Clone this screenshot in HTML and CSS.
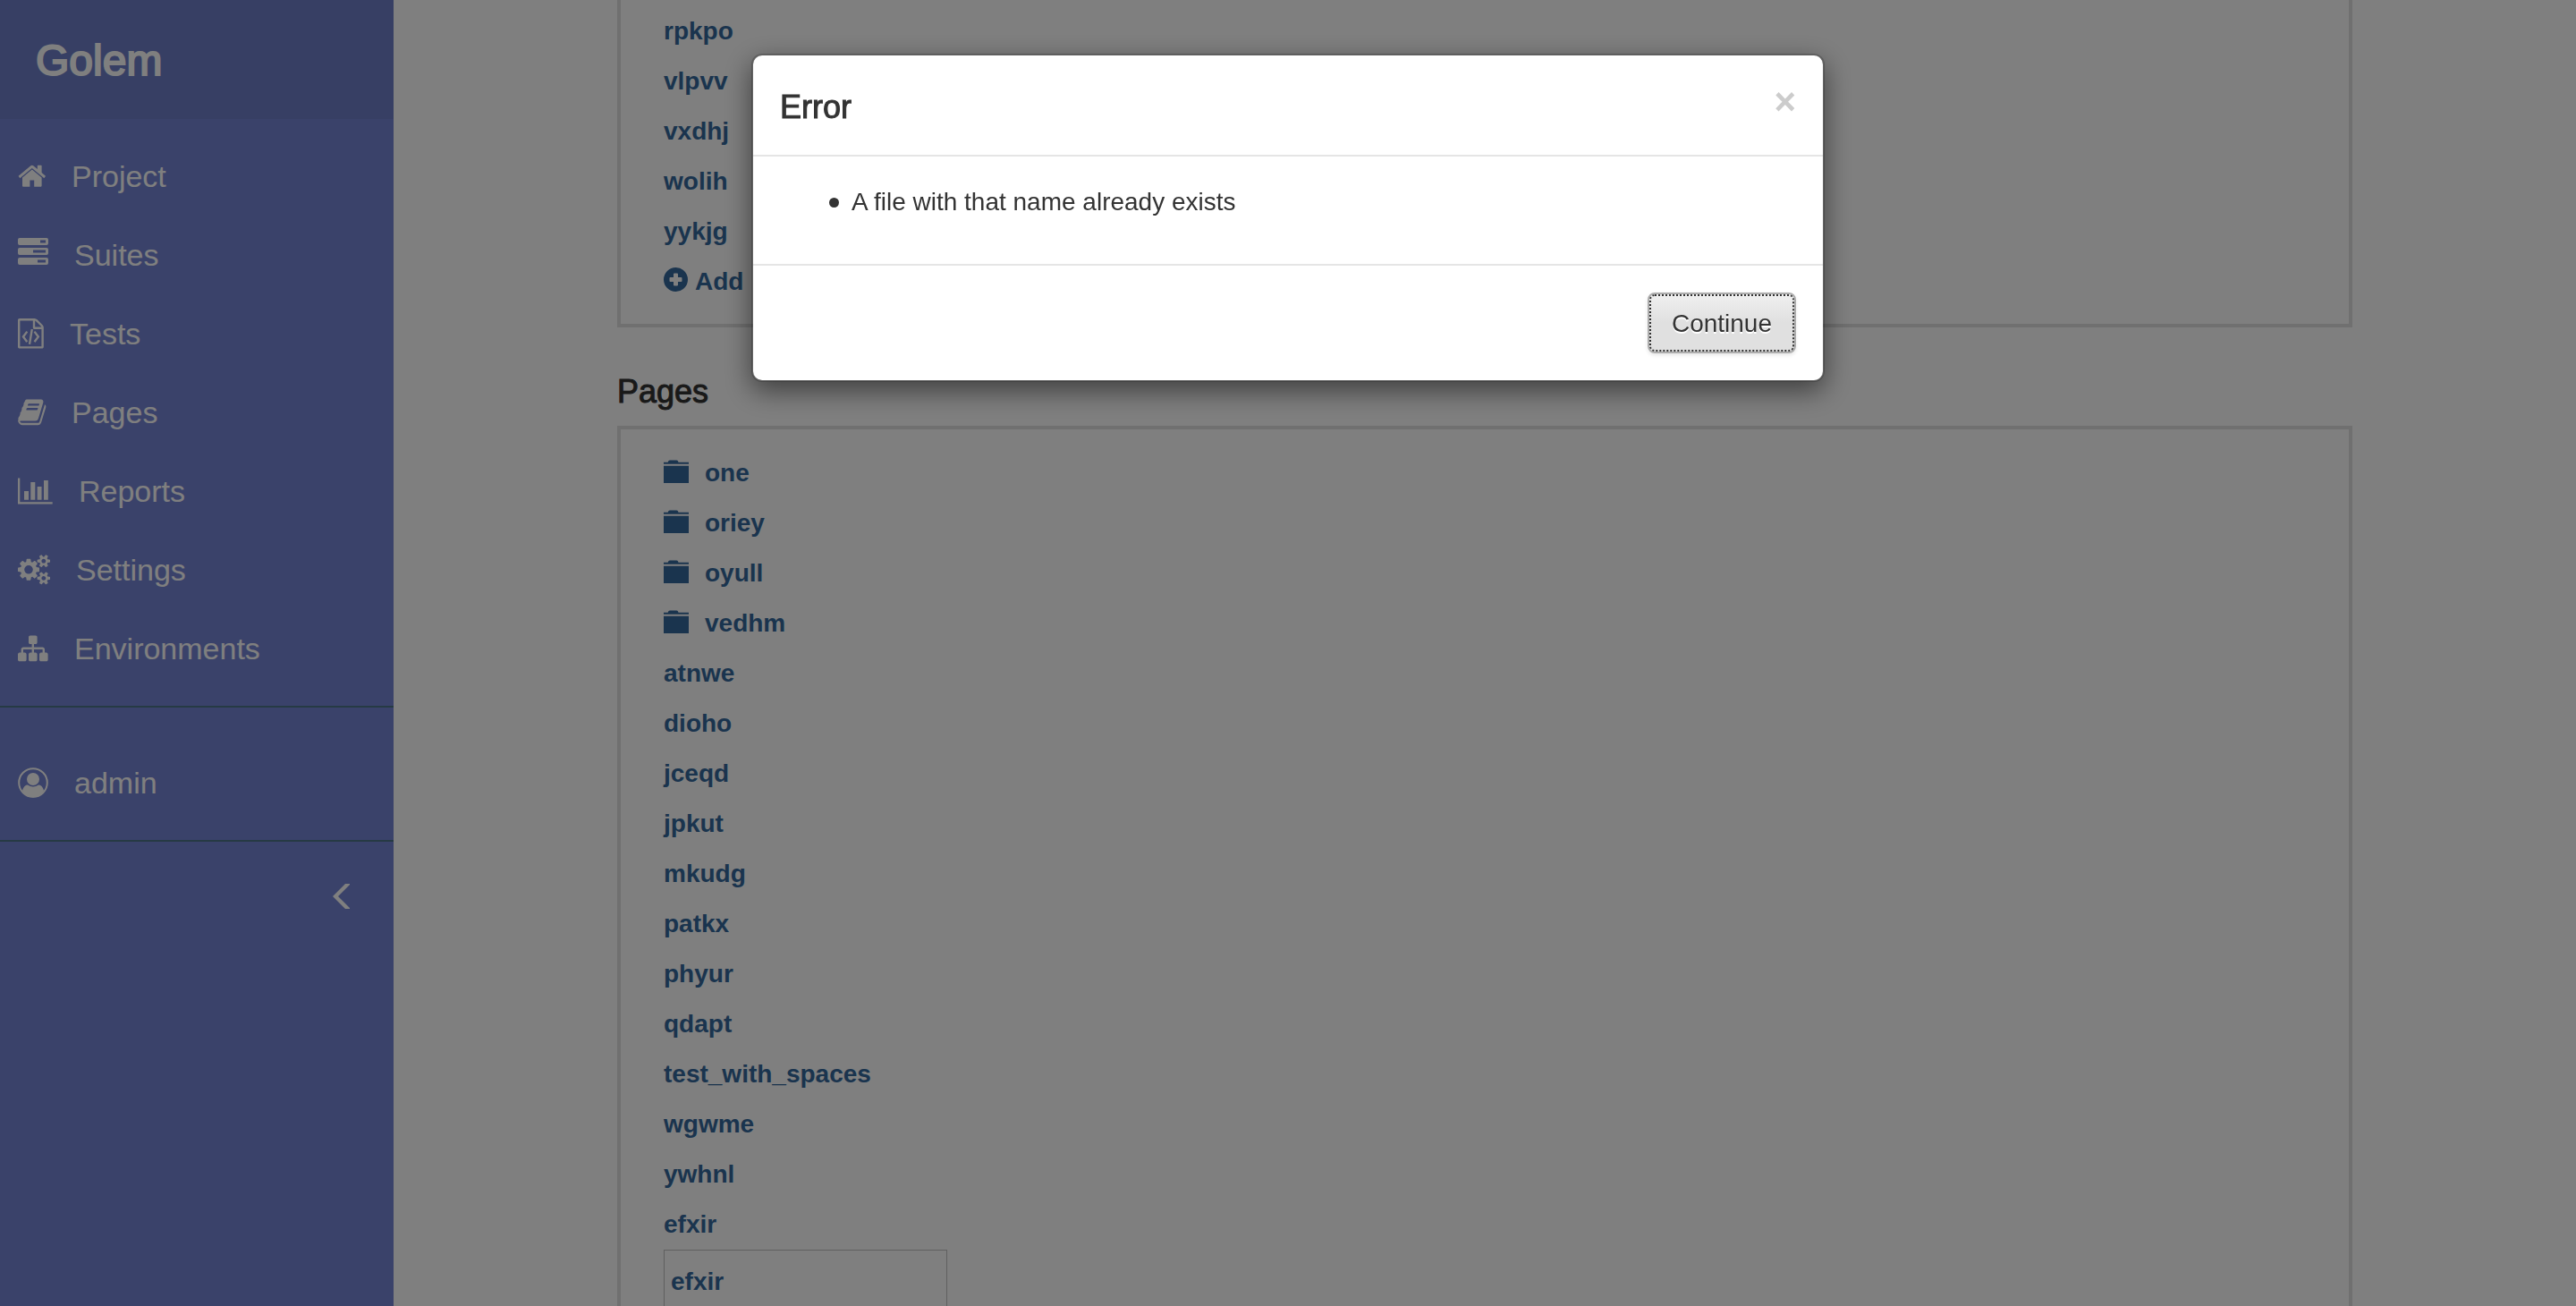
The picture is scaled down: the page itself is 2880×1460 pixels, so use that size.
FILE: index.html
```html
<!DOCTYPE html>
<html lang="en">
<head>
<meta charset="utf-8">
<title>Golem</title>
<link rel="stylesheet" href="styles.css">
</head>
<body>
<svg class="sprite" aria-hidden="true">
  <symbol id="folder" viewBox="0 0 28 28">
    <path d="M0 1.700h4.700Q5.200-.5 7-.5h7.500Q16 -.5 16.500 1.700H28v2H0zM0 5.700h28V25H0z"/>
  </symbol>
</svg>
<div class="layout">
  <aside class="sidebar">
    <a class="brand" href="#">Golem</a>
    <nav>
      <ul class="menu">
        <li><a href="#"><svg width="31" height="40" viewBox="0 0 31 40"><path transform="translate(-1 3) scale(.01875)" d="M1472 992v480q0 26-19 45t-45 19h-384v-384h-256v384h-384q-26 0-45-19t-19-45v-480q0-1 .5-3t.5-3l575-474 575 474q1 2 1 6zm223-69l-62 74q-8 9-21 11h-3q-13 0-21-7l-692-577-692 577q-12 8-24 7-13-2-21-11l-62-74q-8-10-7-23.500t11-21.500l719-599q32-26 76-26t76 26l244 204v-195q0-14 9-23t23-9h192q14 0 23 9t9 23v408l219 182q10 8 11 21.500t-7 23.500z"/></svg>Project</a></li>
        <li><a href="#"><svg width="34" height="40" viewBox="0 0 34 40"><path fill-rule="evenodd" d="M2 1h30q2 0 2 2v4q0 2-2 2H2q-2 0-2-2V3q0-2 2-2zM25 3.500v3h6v-3zM2 12h30q2 0 2 2v4q0 2-2 2H2q-2 0-2-2v-4q0-2 2-2zM17 14.500v3h14v-3zM2 23h30q2 0 2 2v4q0 2-2 2H2q-2 0-2-2v-4q0-2 2-2zM22 25.500v3h9v-3z"/></svg>Suites</a></li>
        <li><a href="#"><svg width="29" height="40" viewBox="0 0 29 40"><g transform="translate(0 3) scale(.01875)"><path transform="translate(-128 0)" d="M1596 380q28 28 48 76t20 88v1152q0 40-28 68t-68 28h-1344q-40 0-68-28t-28-68v-1600q0-40 28-68t68-28h896q40 0 88 20t76 48zm-444-244v376h376q-10-29-22-41l-313-313q-12-12-41-22zm384 1528v-1024h-416q-40 0-68-28t-28-68v-416h-768v1536h1280z"/><path d="M480 768q8-11 21-12.500t24 6.500l51 38q11 8 12.500 21t-6.500 24l-182 243 182 243q8 11 6.500 24t-12.500 21l-51 38q-11 8-24 6.500t-21-12.500l-226-301q-14-19 0-38zm802 301q14 19 0 38l-226 301q-8 11-21 12.500t-24-6.500l-51-38q-11-8-12.500-21t6.500-24l182-243-182-243q-8-11-6.500-24t12.500-21l51-38q11-8 24-6.500t21 12.500zm-620 461q-13-2-20.500-13t-5.500-24l138-831q2-13 13-20.500t24-5.500l63 10q13 2 20.500 13t5.500 24l-138 831q-2 13-13 20.500t-24 5.500z"/></g></svg>Tests</a></li>
        <li><a href="#"><svg width="31" height="40" viewBox="0 0 31 40"><path transform="translate(-1 3) scale(.01875)" d="M1703 478q40 57 18 129l-275 906q-19 64-76.500 107.500t-122.500 43.500h-923q-77 0-148.500-53.500t-99.500-131.500q-24-67-2-127 0-4 3-27t4-37q1-8-3-21.500t-3-19.500q2-11 8-21t16.500-23.500 16.500-23.500q23-38 45-91.500t30-91.500q3-10 .5-30t-.5-28q3-11 17-28t17-23q21-36 42-92t25-90q1-9-2.500-32t.5-28q4-13 22-30.500t22-22.500q19-26 42.500-84.500t27.500-96.500q1-8-3-25.500t-2-26.500q2-8 9-18t18-23 17-21q8-12 16.500-30.500t15-35 16-36 19.500-32 26.500-23.500 36-11.500 47.500 5.500l-1 3q38-9 51-9h761q74 0 114 56t18 130l-274 906q-36 119-71.500 153.500t-128.500 34.500h-869q-27 0-38 15-11 16-1 43 24 70 144 70h923q29 0 56-15.500t35-41.500l300-987q7-22 5-57 38 15 59 43zm-1064 2q-4 13 2 22.500t20 9.500h608q13 0 25.500-9.500t16.500-22.500l21-64q4-13-2-22.500t-20-9.500h-608q-13 0-25.500 9.500t-16.500 22.500zm-83 256q-4 13 2 22.500t20 9.500h608q13 0 25.500-9.500t16.500-22.500l21-64q4-13-2-22.500t-20-9.500h-608q-13 0-25.500 9.500t-16.500 22.500z"/></svg>Pages</a></li>
        <li><a href="#"><svg width="39" height="40" viewBox="0 0 39 40"><path d="M0 5.500h2.300v26.800h36.400v2.300H0zM7 20h5v9.700H7zM14.300 10h5v19.700h-5zM21.700 15h4.800v14.700h-4.800zM29 8h4.800v21.700H29z"/></svg>Reports</a></li>
        <li><a href="#"><svg width="36" height="40" viewBox="0 0 36 40"><path transform="translate(0 3) scale(.01875)" d="M896 896q0-106-75-181t-181-75-181 75-75 181 75 181 181 75 181-75 75-181zm768 512q0-52-38-90t-90-38-90 38-38 90q0 53 37.500 90.500t90.500 37.500 90.500-37.500 37.500-90.500zm0-1024q0-52-38-90t-90-38-90 38-38 90q0 53 37.500 90.500t90.500 37.500 90.500-37.500 37.500-90.500zm-384 421v185q0 10-7 19.500t-16 10.500l-155 24q-11 35-32 76 34 48 90 115 7 11 7 20 0 12-7 19-23 30-82.500 89.500t-78.500 59.500q-11 0-21-7l-115-90q-37 19-77 31-11 108-23 155-7 24-30 24h-186q-11 0-20-7.500t-10-17.500l-23-153q-34-10-75-31l-118 89q-7 7-20 7-11 0-21-8-144-133-144-160 0-9 7-19 10-14 41-53t47-61q-23-44-35-82l-152-24q-10-1-17-9.500t-7-19.500v-185q0-10 7-19.500t16-10.500l155-24q11-35 32-76-34-48-90-115-7-11-7-20 0-12 7-20 22-30 82-89t79-59q11 0 21 7l115 90q34-18 77-32 11-108 23-154 7-24 30-24h186q11 0 20 7.500t10 17.500l23 153q34 10 75 31l118-89q8-7 20-7 11 0 21 8 144 133 144 160 0 8-7 19-12 16-42 54t-45 60q23 48 34 82l152 23q10 2 17 10.500t7 19.500zm640 533v140q0 16-149 31-12 27-30 52 51 113 51 138 0 4-4 7-122 71-124 71-8 0-46-47t-52-68q-20 2-30 2t-30-2q-14 21-52 68t-46 47q-2 0-124-71-4-3-4-7 0-25 51-138-18-25-30-52-149-15-149-31v-140q0-16 149-31 13-29 30-52-51-113-51-138 0-4 4-7 4-2 35-20t59-34 30-16q8 0 46 46.500t52 67.500q20-2 30-2t30 2q51-71 92-112l6-2q4 0 124 70 4 3 4 7 0 25-51 138 17 23 30 52 149 15 149 31zm0-1024v140q0 16-149 31-12 27-30 52 51 113 51 138 0 4-4 7-122 71-124 71-8 0-46-47t-52-68q-20 2-30 2t-30-2q-14 21-52 68t-46 47q-2 0-124-71-4-3-4-7 0-25 51-138-18-25-30-52-149-15-149-31v-140q0-16 149-31 13-29 30-52-51-113-51-138 0-4 4-7 4-2 35-20t59-34 30-16q8 0 46 46.500t52 67.500q20-2 30-2t30 2q51-71 92-112l6-2q4 0 124 70 4 3 4 7 0 25-51 138 17 23 30 52 149 15 149 31z"/></svg>Settings</a></li>
        <li><a href="#"><svg width="34" height="40" viewBox="0 0 34 40"><path transform="translate(0 3) scale(.01875)" d="M1792 1248v320q0 40-28 68t-68 28h-320q-40 0-68-28t-28-68v-320q0-40 28-68t68-28h96v-192h-512v192h96q40 0 68 28t28 68v320q0 40-28 68t-68 28h-320q-40 0-68-28t-28-68v-320q0-40 28-68t68-28h96v-192h-512v192h96q40 0 68 28t28 68v320q0 40-28 68t-68 28h-320q-40 0-68-28t-28-68v-320q0-40 28-68t68-28h96v-192q0-52 38-90t90-38h512v-192h-96q-40 0-68-28t-28-68v-320q0-40 28-68t68-28h320q40 0 68 28t28 68v320q0 40-28 68t-68 28h-96v192h512q52 0 90 38t38 90v192h96q40 0 68 28t28 68z"/></svg>Environments</a></li>
      </ul>
      <ul class="menu menu-user">
        <li><a href="#"><svg width="34" height="40" viewBox="0 0 34 40"><circle cx="17" cy="20" r="15.800" fill="none" stroke="currentColor" stroke-width="2"/><circle cx="17" cy="16" r="7"/><path d="M5 29C6 25 8 22.500 11 22.500q6 4 12 0C26 22.500 28 25 29 29q-4 7.500-12 7.500T5 29z"/></svg>admin</a></li>
      </ul>
    </nav>
    <button class="collapse" type="button" aria-label="Collapse menu"><svg width="19" height="28" viewBox="0 0 19 28"><path d="M14 0h5v1L6 14l13 13v1h-5L0 14z"/></svg></button>
  </aside>
  <main class="content">
    <section class="panel panel-cut">
      <ul class="files">
        <li><a href="#">rpkpo</a></li>
        <li><a href="#">vlpvv</a></li>
        <li><a href="#">vxdhj</a></li>
        <li><a href="#">wolih</a></li>
        <li><a href="#">yykjg</a></li>
        <li><a class="add" href="#"><svg width="27" height="32" viewBox="0 0 27 32"><path fill-rule="evenodd" d="M13.500 0a13.500 13.500 0 1 0 0 27a13.500 13.500 0 1 0 0-27zM12 6.500h3q1 0 1 1v3.500h3.500q1 0 1 1v3q0 1-1 1H16v3.500q0 1-1 1h-3q-1 0-1-1v-3.500H7.500q-1 0-1-1v-3q0-1 1-1H11V7.500q0-1 1-1z"/></svg>Add</a></li>
      </ul>
    </section>
    <h3 class="heading">Pages</h3>
    <section class="panel">
      <ul class="files">
        <li><a class="folder" href="#"><svg width="28" height="28"><use href="#folder"/></svg>one</a></li>
        <li><a class="folder" href="#"><svg width="28" height="28"><use href="#folder"/></svg>oriey</a></li>
        <li><a class="folder" href="#"><svg width="28" height="28"><use href="#folder"/></svg>oyull</a></li>
        <li><a class="folder" href="#"><svg width="28" height="28"><use href="#folder"/></svg>vedhm</a></li>
        <li><a href="#">atnwe</a></li>
        <li><a href="#">dioho</a></li>
        <li><a href="#">jceqd</a></li>
        <li><a href="#">jpkut</a></li>
        <li><a href="#">mkudg</a></li>
        <li><a href="#">patkx</a></li>
        <li><a href="#">phyur</a></li>
        <li><a href="#">qdapt</a></li>
        <li><a href="#">test_with_spaces</a></li>
        <li><a href="#">wgwme</a></li>
        <li><a href="#">ywhnl</a></li>
        <li><a href="#">efxir</a></li>
        <li><input class="new-file" type="text" value="efxir" aria-label="New page name"></li>
      </ul>
    </section>
  </main>
</div>
<div class="backdrop">
  <div class="modal" role="dialog" aria-modal="true" aria-labelledby="modal-title">
    <header class="modal-header">
      <h4 class="modal-title" id="modal-title">Error</h4>
      <button class="close" type="button" aria-label="Close">×</button>
    </header>
    <div class="modal-body">
      <ul>
        <li>A file with that name already exists</li>
      </ul>
    </div>
    <footer class="modal-footer">
      <button class="btn" type="button">Continue</button>
    </footer>
  </div>
</div>
</body>
</html>
```
FILE: styles.css
```css
* {
  box-sizing: border-box;
}

body {
  margin: 0;
  height: 100vh;
  overflow: hidden;
  background: #fff;
  color: #333;
  font: 28px/40px "Liberation Sans", Arial, sans-serif;
}

ul,
h3,
h4 {
  margin: 0;
  padding: 0;
}

a {
  color: #34689c;
  text-decoration: none;
}

svg {
  flex: none;
  overflow: visible;
  fill: currentColor;
}

symbol {
  overflow: visible;
}

.sprite {
  display: none;
}

.layout {
  display: flex;
  height: 100vh;
}

/* Sidebar */
.sidebar {
  display: flex;
  flex: none;
  flex-direction: column;
  width: 440px;
  background: #7484d4;
  color: #fff;
}

.sidebar a {
  display: flex;
  align-items: center;
  color: #fff;
}

.sidebar .brand {
  height: 133px;
  padding: 2px 0 0 40px;
  background: #6e7ec8;
  font-size: 48px;
  -webkit-text-stroke: 2px;
}

.menu {
  padding: 20px 0;
  border-bottom: 2px solid #4c7488;
  list-style: none;
}

.menu-user {
  padding-top: 40px;
}

.menu a {
  gap: 29px;
  height: 88px;
  padding-left: 20px;
  font-size: 34px;
}

.collapse {
  align-self: flex-end;
  margin: 47px 49px 0;
  padding: 0;
  border: 0;
  background: none;
  color: #fff;
  line-height: 0;
}

/* File lists */
.content {
  flex: 1;
  padding: 0 250px;
}

.panel {
  padding: 20px 48px;
  border: 4px solid #e0e0e0;
}

.panel-cut {
  padding-top: 6px;
  border-top: 0;
}

.heading {
  margin: 52px 0 18px;
  font-size: 36px;
  font-weight: 400;
  -webkit-text-stroke: 1px;
}

.files {
  list-style: none;
}

.files a {
  display: flex;
  align-items: center;
  height: 56px;
  padding-top: 2px;
  font-weight: 700;
}

.files .folder {
  gap: 18px;
}

.files .add {
  gap: 8px;
}

.new-file {
  display: block;
  width: 317px;
  height: 70px;
  margin-top: 1px;
  padding: 2px 7px 0;
  border: 1px solid #c0c0c0;
  background: #fff;
  color: #34689c;
  font: inherit;
  font-weight: 700;
}

/* Error dialog */
.backdrop {
  position: fixed;
  inset: 0;
  padding: 60px 0;
  background: rgba(0, 0, 0, .5);
}

.modal {
  width: 1200px;
  margin: 0 auto;
  border: 2px solid rgba(0, 0, 0, .2);
  border-radius: 12px;
  background: #fff;
  background-clip: padding-box;
  box-shadow: 0 10px 30px rgba(0, 0, 0, .5);
}

.modal-header {
  display: flex;
  align-items: flex-start;
  justify-content: space-between;
  height: 113px;
  padding: 30px;
  border-bottom: 2px solid #e5e5e5;
}

.modal-title {
  font-size: 36px;
  font-weight: 400;
  line-height: 56px;
  -webkit-text-stroke: 1px;
}

.close {
  padding: 0;
  border: 0;
  background: none;
  color: #ccc;
  font: 700 42px/44px "Liberation Sans", Arial, sans-serif;
}

.modal-body {
  padding: 31px 30px 29px;
}

.modal-body ul {
  margin-bottom: 20px;
  padding-left: 55px;
  list-style: none;
}

.modal-body li {
  display: flex;
  align-items: center;
  gap: 14px;
}

.modal-body li::before {
  content: "";
  width: 11px;
  height: 11px;
  border-radius: 50%;
  background: #333;
}

.modal-footer {
  display: flex;
  justify-content: flex-end;
  padding: 30px;
  border-top: 2px solid #e5e5e5;
}

.btn {
  padding: 13px 25px 11px;
  border: 2px solid #adadad;
  border-radius: 8px;
  outline: 2px dotted #333;
  outline-offset: -4px;
  background: linear-gradient(#f0f0f0, #e0e0e0 50%);
  box-shadow: 0 2px 4px rgba(0, 0, 0, .1);
  color: #333;
  font: inherit;
  text-shadow: 0 2px 0 #fff;
}
```
